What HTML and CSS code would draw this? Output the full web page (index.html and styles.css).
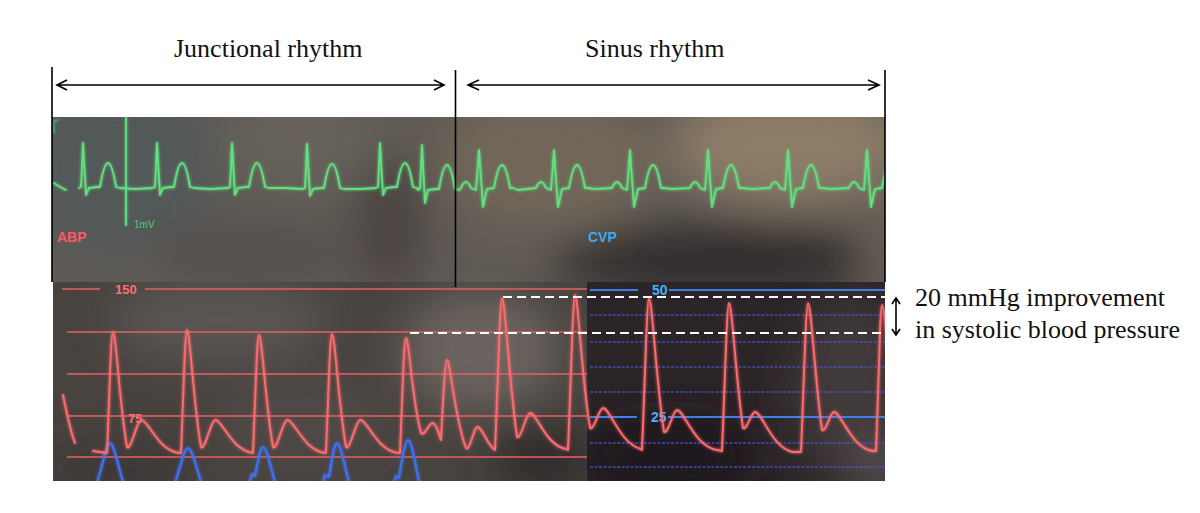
FILE: index.html
```html
<!DOCTYPE html>
<html lang="en">
<head>
<meta charset="utf-8">
<title>Junctional vs sinus rhythm</title>
<link rel="stylesheet" href="styles.css">
</head>
<body>
<div class="figure">
<svg class="canvas" width="1200" height="513" viewBox="0 0 1200 513" xmlns="http://www.w3.org/2000/svg">
  <defs>
    <clipPath id="topClip"><rect x="52" y="117" width="833" height="165"/></clipPath>
    <clipPath id="botClip"><rect x="53" y="282" width="832" height="199"/></clipPath>
    <clipPath id="blueClip"><rect x="587" y="282" width="298" height="199"/></clipPath>
    <filter id="soft" x="-30%" y="-30%" width="160%" height="160%"><feGaussianBlur stdDeviation="22"/></filter>
    <filter id="glow" x="-10%" y="-10%" width="120%" height="120%">
      <feGaussianBlur stdDeviation="1.4" result="b"/>
      <feMerge><feMergeNode in="b"/><feMergeNode in="SourceGraphic"/></feMerge>
    </filter>
  </defs>

  <!-- top photo: ECG -->
  <g clip-path="url(#topClip)">
    <rect class="bg-top" x="52" y="117" width="833" height="165"/>
    <g filter="url(#soft)">
      <ellipse cx="120" cy="170" rx="100" ry="90" fill="#525859"/>
      <ellipse cx="300" cy="140" rx="80" ry="45" fill="#67625c"/>
      <ellipse cx="390" cy="225" rx="32" ry="70" fill="#48423f"/>
      <ellipse cx="550" cy="160" rx="110" ry="70" fill="#716659"/>
      <ellipse cx="790" cy="145" rx="120" ry="60" fill="#8c7b68"/>
      <ellipse cx="720" cy="262" rx="170" ry="38" fill="#332d2d"/>
      <ellipse cx="250" cy="255" rx="100" ry="35" fill="#57514e"/>
      <ellipse cx="890" cy="250" rx="30" ry="40" fill="#6a5e55"/>
    </g>
    <g class="ecg" filter="url(#glow)">
      <path d="M54,122 L54,133 M54,121 L58,120" class="faint"/>
      <path d="M126,117 L126,225"/>
      <path d="M54,183 L60,187 L66,190"/>
      <path d="M79,188 l2,-1 l2,-44 l3,52 l3,-7 l8,-1 l3,0 q8,-48 16,0 l4,1 L135,189 L153,188 l2,-1 l2,-44 l3,52 l3,-7 l8,-1 l3,0 q8,-48 16,0 l4,1 L210,189 L228,188 l2,-1 l2,-44 l3,52 l3,-7 l8,-1 l3,0 q8,-48 16,0 l4,1 L285,188 L303,189 l2,-1 l2,-44 l3,52 l3,-7 l8,-1 l3,0 q8,-48 16,0 l4,1 L360,189 L376,188 l2,-1 l2,-44 l3,52 l3,-7 l8,-1 l3,0 q8,-48 16,0 l4,1 L418,190 l2,-1 l2,-44 l3,58 l3,-13 l8,-1 l3,0 q8,-48 16,0 l4,1 L461,188 q5,-12 10,0 l5,2 l3,-40 l4,57 l4,-18 l7,-1 q8,-46 16,0 l3,0 L518,190 L536,188 q5,-12 10,0 l5,2 l3,-40 l4,57 l4,-18 l7,-1 q8,-46 16,0 l3,0 L595,189 L612,188 q5,-12 10,0 l5,2 l3,-40 l4,57 l4,-18 l7,-1 q8,-46 16,0 l3,0 L672,189 L690,188 q5,-12 10,0 l5,2 l3,-40 l4,57 l4,-18 l7,-1 q8,-46 16,0 l3,0 L752,189 L770,188 q5,-12 10,0 l5,2 l3,-40 l4,57 l4,-18 l7,-1 q8,-46 16,0 l3,0 L831,189 L849,188 q5,-12 10,0 l5,2 l3,-40 l4,57 l4,-18 l7,-1 q8,-46 16,0 l3,0"/>
    </g>
    <text class="mon small-green" x="134" y="228">1mV</text>
    <text class="mon abp" x="57" y="241.5">ABP</text>
    <text class="mon cvp" x="588" y="242">CVP</text>
  </g>

  <!-- bottom photo: ABP / CVP -->
  <g clip-path="url(#botClip)">
    <rect class="bg-bot" x="53" y="282" width="832" height="199"/>
    <g filter="url(#soft)">
      <ellipse cx="220" cy="320" rx="110" ry="40" fill="#5a5654"/>
      <ellipse cx="480" cy="350" rx="80" ry="60" fill="#6a645f"/>
      <ellipse cx="300" cy="420" rx="80" ry="40" fill="#4f4a47"/>
      <ellipse cx="545" cy="458" rx="50" ry="35" fill="#2e2a29"/>
      <ellipse cx="120" cy="470" rx="80" ry="22" fill="#3a3634"/>
    </g>
  </g>
  <g clip-path="url(#blueClip)">
    <rect class="bg-blue" x="587" y="282" width="298" height="199"/>
    <g filter="url(#soft)">
      <ellipse cx="850" cy="390" rx="55" ry="90" fill="#433a3b"/>
      <ellipse cx="670" cy="455" rx="90" ry="40" fill="#1e191a"/>
      <ellipse cx="880" cy="470" rx="25" ry="30" fill="#5c5252"/>
    </g>
  </g>

  <g clip-path="url(#botClip)">
    <g class="grid-red">
      <path d="M62,289 L100,289 M145,289 L587,289 M67,332 L587,332 M67,374 L587,374 M67,416 L587,416 M67,457 L587,457"/>
    </g>
    <g class="grid-blue">
      <path d="M590,290 L638,290 M669,290 L885,290 M590,417 L637,417 M668,417 L885,417"/>
    </g>
    <g class="grid-dot">
      <path d="M590,315 L885,315 M590,342 L885,342 M590,367 L885,367 M590,392 L885,392 M590,443 L885,443 M590,467 L885,467"/>
    </g>

    <text class="mon red-num" x="115" y="294">150</text>
    <text class="mon red-num" x="128" y="423">75</text>
    <text class="mon blue-num" x="652" y="295">50</text>
    <text class="mon blue-num" x="651" y="422">25</text>

    <g class="cvp-wave" filter="url(#glow)">
      <path d="M96,485 C102,470 106,443 110,443 C114,443 119,470 124,485"/>
      <path d="M174,485 C180,470 184,448 188,448 C192,448 197,470 202,485"/>
      <path d="M249,485 L252,474 L255,476 C258,462 260,447 263,447 C267,447 271,470 276,485"/>
      <path d="M322,485 L325,475 L329,477 C332,460 334,443 337,443 C341,443 345,470 350,485"/>
      <path d="M393,485 L396,476 L399,478 C402,460 405,440 408,440 C412,440 416,470 420,485"/>
    </g>

    <g class="abp-wave" filter="url(#glow)">
      <path d="M63,395 C66,410 70,430 75,443"/>
      <path d="M93,451 L107,453 C110,380 111,332 113,332 C116,332 119,400 127,447 C131,452 137,418 142,420 C149,422 158,450 179,453 L181,453 C184,380 185,330 187,330 C190,330 193,400 201,447 C205,452 211,418 216,420 C223,422 232,450 253,453 C256,380 257,335 259,335 C262,335 265,400 273,447 C277,452 283,418 288,420 C295,422 304,450 325,453 L326,453 C329,380 330,334 332,334 C335,334 338,400 346,447 C350,452 356,418 361,420 C368,422 377,450 398,453 L400,453 C403,380 404,338 406,338 C409,338 412,400 421,433 C425,437 429,422 433,423 C437,424 439,436 441,440 C443,400 445,360 447,360 C450,360 455,420 466,448 C470,452 474,425 478,427 C483,429 488,446 495,450 C498,380 500,298 502,298 C505,298 509,380 517,437 C521,440 526,413 530,413 C537,413 545,445 566,449 L568,450 C571,380 573,295 575,295 C578,295 582,380 590,428 C594,431 599,408 603,408 C610,408 620,444 641,449 L642,450 C645,380 647,298 649,298 C652,298 656,380 664,432 C668,435 673,410 677,410 C684,410 694,446 717,450 L722,451 C725,380 727,303 729,303 C732,303 736,380 743,428 C747,431 751,412 755,412 C762,412 772,448 793,452 L801,452 C804,380 806,303 808,303 C811,303 815,380 822,430 C826,433 830,412 834,412 C841,412 851,448 873,451 L876,451 C879,380 880,305 882,305 C885,305 888,360 892,420"/>
    </g>
  </g>

  <!-- white dashed reference lines -->
  <path class="dash" d="M503,297 L885,297 M410,333 L885,333"/>

  <!-- annotation lines and arrows -->
  <g class="ink">
    <path d="M52,67 L52,282 M455.5,70 L455.5,287 M885,70 L885,282"/>
    <path d="M57,85 L444,85 M67,80 L57,85 L67,90 M434,80 L444,85 L434,90"/>
    <path d="M468,85 L879,85 M479,80 L468,85 L479,90 M868,80 L879,85 L868,90"/>
    <path d="M896,298 L896,335 M892,304 L896,298 L900,304 M892,329 L896,335 L900,329"/>
  </g>

  <text class="lbl" x="174" y="57">Junctional rhythm</text>
  <text class="lbl" x="585" y="56.5">Sinus rhythm</text>
  <text class="lbl" x="915" y="306">20 mmHg improvement</text>
  <text class="lbl" x="915" y="337.5">in systolic blood pressure</text>
</svg>
</div>
</body>
</html>
```

FILE: styles.css
```css
html, body {
  margin: 0;
  padding: 0;
  background: #ffffff;
}

.figure {
  width: 1200px;
  height: 513px;
  overflow: hidden;
}

.canvas {
  display: block;
}

.bg-top { fill: #605a55; }
.bg-bot { fill: #48433f; }
.bg-blue { fill: #2c2527; }

.ecg path {
  fill: none;
  stroke: #62e07f;
  stroke-width: 1.8;
  stroke-linejoin: round;
  stroke-linecap: round;
}
.ecg path.faint {
  stroke: #4fae66;
  stroke-width: 1.5;
  opacity: 0.7;
}

.abp-wave path {
  fill: none;
  stroke: #ff6b6e;
  stroke-width: 1.9;
  stroke-linejoin: round;
  stroke-linecap: round;
}

.cvp-wave path {
  fill: none;
  stroke: #3f6ff0;
  stroke-width: 2.2;
  stroke-linejoin: round;
}

.grid-red path {
  fill: none;
  stroke: #dc5f5e;
  stroke-width: 2;
  opacity: 0.8;
}

.grid-blue path {
  fill: none;
  stroke: #3d80ea;
  stroke-width: 2;
}

.grid-dot path {
  fill: none;
  stroke: #4c55d4;
  stroke-width: 1.6;
  stroke-dasharray: 3 1.5;
  opacity: 0.8;
}

.dash {
  fill: none;
  stroke: #ffffff;
  stroke-width: 2;
  stroke-dasharray: 9 5;
}

.ink path {
  fill: none;
  stroke: #000000;
  stroke-width: 1.6;
}

.lbl {
  font-family: "Liberation Serif", "Times New Roman", serif;
  font-size: 26px;
  fill: #111111;
}

.mon {
  font-family: "Liberation Sans", Arial, sans-serif;
  font-weight: bold;
  font-size: 14px;
}

.abp { fill: #ff5a66; }
.cvp { fill: #3faaf2; }
.red-num { fill: #ff6d6d; font-size: 13px; }
.blue-num { fill: #42b2ff; }
.small-green {
  fill: #5cc474;
  font-size: 10px;
  font-weight: normal;
}
```
